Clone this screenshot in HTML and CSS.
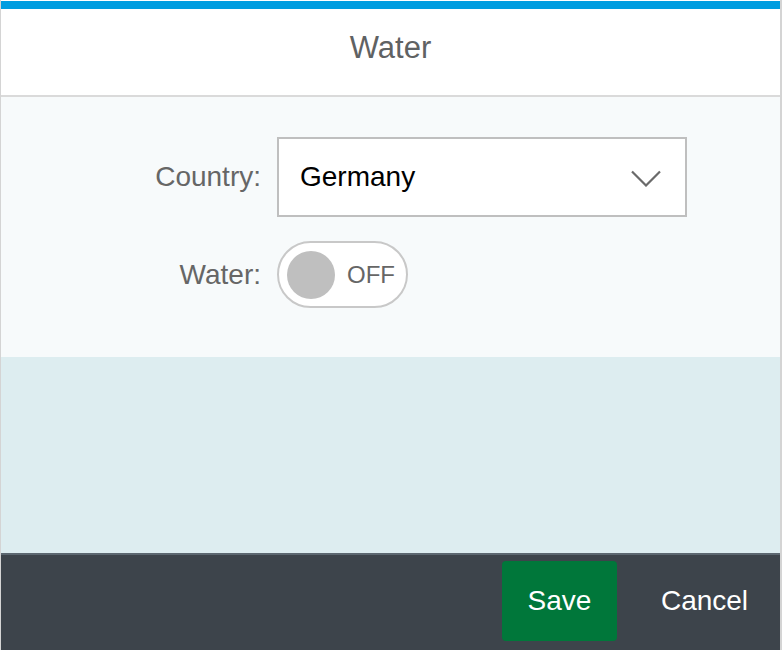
FILE: index.html
```html
<!DOCTYPE html>
<html lang="en">
<head>
<meta charset="utf-8">
<title>Water</title>
<link rel="stylesheet" href="styles.css">
</head>
<body>
<div class="dialog">
  <div class="topbar"></div>
  <header class="header"><h1 class="title">Water</h1></header>
  <section class="content">
    <div class="form">
      <label class="label">Country:</label>
      <div class="select">
        <span class="select-value">Germany</span>
        <svg class="chevron" width="30" height="17" viewBox="0 0 30 17"><path d="M1 1.5 L15 15.5 L29 1.5" fill="none" stroke="#6a6a6a" stroke-width="2.2"/></svg>
      </div>
      <label class="label">Water:</label>
      <div class="field-toggle">
        <div class="toggle">
          <span class="knob"></span>
          <span class="toggle-text">OFF</span>
        </div>
      </div>
    </div>
  </section>
  <section class="filler"></section>
  <footer class="footer">
    <button class="btn btn-save">Save</button>
    <button class="btn btn-cancel">Cancel</button>
  </footer>
</div>
</body>
</html>
```

FILE: styles.css
```css
* { box-sizing: border-box; }
html, body { margin: 0; padding: 0; }
body {
  width: 782px;
  height: 650px;
  background: #ffffff;
  font-family: "Liberation Sans", Arial, sans-serif;
  overflow: hidden;
}
.dialog {
  width: 782px;
  height: 650px;
  display: flex;
  flex-direction: column;
  border-left: 1px solid #d4d4d4;
  border-right: 2px solid #d4d4d4;
  padding-top: 1px;
}
.topbar {
  height: 8px;
  background: #009de0;
  flex: none;
}
.header {
  height: 88px;
  flex: none;
  background: #ffffff;
  border-bottom: 2px solid #dadada;
  display: flex;
  align-items: center;
  justify-content: center;
}
.title {
  margin: 0;
  font-weight: normal;
  font-size: 31px;
  color: #5f6263;
  padding-bottom: 8px;
}
.content {
  height: 260px;
  flex: none;
  background: #f7fafb;
  padding-top: 40px;
}
.form {
  display: grid;
  grid-template-columns: 260px 410px;
  column-gap: 16px;
  row-gap: 24px;
  align-items: center;
}
.label {
  text-align: right;
  font-size: 28px;
  color: #666666;
}
.select {
  height: 80px;
  background: #ffffff;
  border: 2px solid #bfbfbf;
  display: flex;
  align-items: center;
  justify-content: space-between;
  padding: 0 24px 0 21px;
}
.select-value {
  font-size: 28px;
  color: #000000;
}
.chevron { display: block; margin-top: 2px; }
.field-toggle { display: flex; }
.toggle {
  width: 131px;
  height: 67px;
  border: 2px solid #c8c8c8;
  border-radius: 34px;
  background: #ffffff;
  display: flex;
  align-items: center;
  padding-left: 8px;
}
.knob {
  width: 48px;
  height: 48px;
  border-radius: 50%;
  background: #bfbfbf;
}
.toggle-text {
  margin-left: 12px;
  font-size: 24px;
  color: #666666;
  margin-top: 1px;
}
.filler {
  flex: 1;
  background: #ddedf0;
}
.footer {
  height: 97px;
  flex: none;
  background: #3d444b;
  border-top: 2px solid #5c6770;
  display: flex;
  justify-content: flex-end;
  align-items: center;
}
.btn {
  font-family: "Liberation Sans", Arial, sans-serif;
  font-size: 28px;
  color: #ffffff;
  border: none;
  cursor: pointer;
  height: 80px;
  padding: 0;
}
.btn-save {
  width: 115px;
  background: #00773a;
  border-radius: 4px;
  margin-bottom: 3px;
}
.btn-cancel {
  width: 145px;
  margin-left: 15px;
  margin-right: 3px;
  background: transparent;
  margin-bottom: 3px;
}
```
